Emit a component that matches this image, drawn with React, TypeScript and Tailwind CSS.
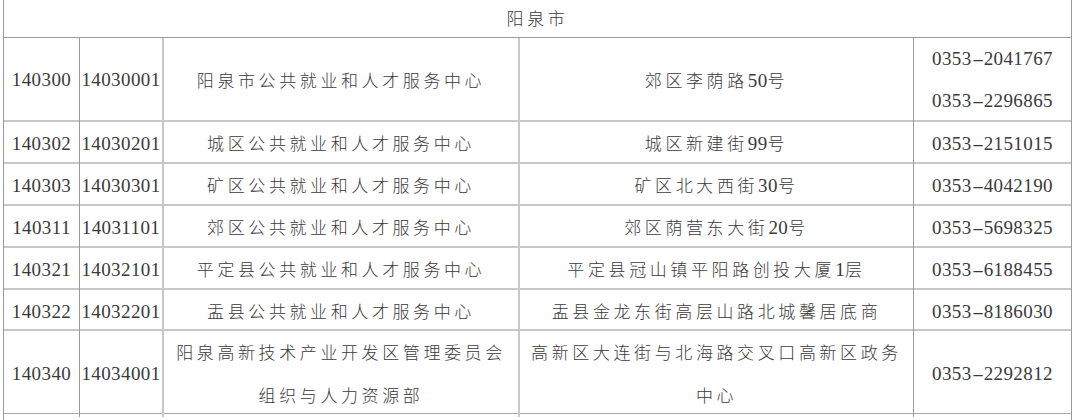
import React from "react";

const rows: { a: string; b: string; name: string[]; addr: string[]; tel: string[]; h: string }[] = [
  { a: "140300", b: "14030001", name: ["阳泉市公共就业和人才服务中心"], addr: ["郊区李荫路50号"], tel: ["0353-2041767", "0353-2296865"], h: "h-[84px]" },
  { a: "140302", b: "14030201", name: ["城区公共就业和人才服务中心"], addr: ["城区新建街99号"], tel: ["0353-2151015"], h: "h-[42px]" },
  { a: "140303", b: "14030301", name: ["矿区公共就业和人才服务中心"], addr: ["矿区北大西街30号"], tel: ["0353-4042190"], h: "h-[42px]" },
  { a: "140311", b: "14031101", name: ["郊区公共就业和人才服务中心"], addr: ["郊区荫营东大街20号"], tel: ["0353-5698325"], h: "h-[42px]" },
  { a: "140321", b: "14032101", name: ["平定县公共就业和人才服务中心"], addr: ["平定县冠山镇平阳路创投大厦1层"], tel: ["0353-6188455"], h: "h-[42px]" },
  { a: "140322", b: "14032201", name: ["盂县公共就业和人才服务中心"], addr: ["盂县金龙东街高层山路北城馨居底商"], tel: ["0353-8186030"], h: "h-[41px]" },
  { a: "140340", b: "14034001", name: ["阳泉高新技术产业开发区管理委员会", "组织与人力资源部"], addr: ["高新区大连街与北海路交叉口高新区政务", "中心"], tel: ["0353-2292812"], h: "h-[83px]" },
];

function T({ s }: { s: string }) {
  const parts = s.split(/([0-9]+|-)/).filter((p) => p.length > 0);
  return (
    <>
      {parts.map((p, i) =>
        p === "-" ? (
          <span key={i} className="inline-block w-[12px] text-center scale-x-[1.9] font-['Liberation_Serif',serif] text-[19px]">-</span>
        ) : /^[0-9]+$/.test(p) ? (
          <span key={i} className="font-['Liberation_Serif',serif] text-[19px] tracking-[0.4px]">{p}</span>
        ) : (
          <span key={i} className="font-['Noto_Sans_CJK_SC',sans-serif] font-light text-[17px] tracking-[3.6px]">{p}</span>
        )
      )}
    </>
  );
}

function Lines({ lines }: { lines: string[] }) {
  return (
    <div className="flex flex-col items-center leading-[41px]">
      {lines.map((l, i) => (
        <div key={i} className="whitespace-nowrap">
          <T s={l} />
        </div>
      ))}
    </div>
  );
}

export default function App() {
  return (
    <div className="w-[1080px] h-[420px] overflow-hidden bg-white text-[#3a3a3a]">
      <div className="ml-[3px] w-[1069px] border-l border-r border-[#9a9a9a]">
        <div className="h-[38px] border-b border-[#9a9a9a] flex items-center justify-center">
          <Lines lines={["阳泉市"]} />
        </div>
        {rows.map((r, i) => (
          <div
            key={i}
            className={`grid grid-cols-[76px_84px_356px_394px_157px] ${r.h} ${i === rows.length - 1 ? "border-b border-[#a8a8a8]" : "border-b-2 border-[#c8c8c8]"}`}
          >
            <div className="border-r border-[#9a9a9a] flex items-center justify-center">
              <Lines lines={[r.a]} />
            </div>
            <div className="border-r-2 border-[#c8c8c8] flex items-center justify-center">
              <Lines lines={[r.b]} />
            </div>
            <div className="border-r-2 border-[#c8c8c8] flex items-center justify-center">
              <Lines lines={r.name} />
            </div>
            <div className="border-r border-[#9a9a9a] flex items-center justify-center">
              <Lines lines={r.addr} />
            </div>
            <div className="flex items-center justify-center">
              <Lines lines={r.tel} />
            </div>
          </div>
        ))}
        <div className="h-[10px]" />
      </div>
    </div>
  );
}
